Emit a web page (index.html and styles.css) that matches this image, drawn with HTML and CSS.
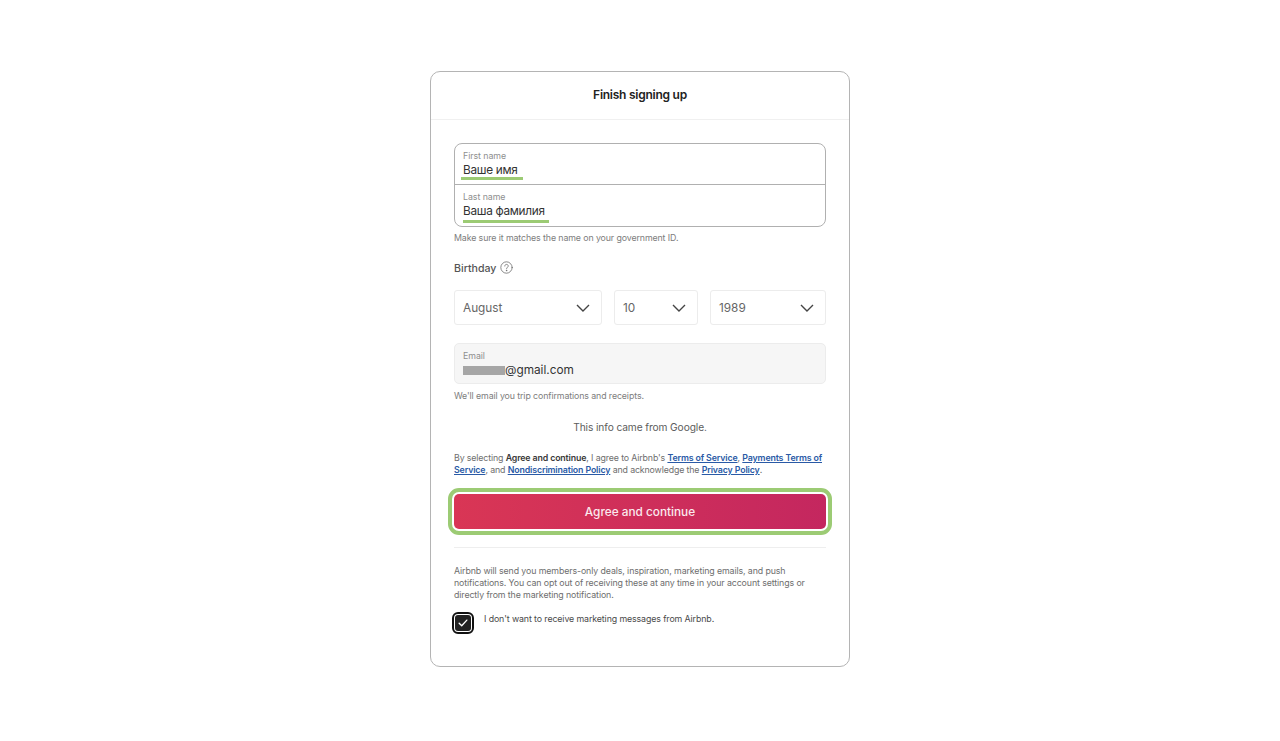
FILE: index.html
```html
<!DOCTYPE html>
<html lang="en">
<head>
<meta charset="utf-8">
<title>Finish signing up</title>
<link rel="stylesheet" href="styles.css">
</head>
<body>
<main class="card">
  <header class="card-header">Finish signing up</header>
  <div class="card-body">
    <div class="name-group">
      <div class="name-row">
        <div class="field-label">First name</div>
        <div class="field-value name-value">Ваше имя</div>
        <span class="mark mark-first"></span>
      </div>
      <div class="name-row name-row-last">
        <div class="field-label">Last name</div>
        <div class="field-value name-value">Ваша фамилия</div>
        <span class="mark mark-last"></span>
      </div>
    </div>
    <p class="hint hint-name">Make sure it matches the name on your government ID.</p>

    <div class="birthday-label">
      <span>Birthday</span>
      <svg class="help-icon" viewBox="0 0 24 24" width="13" height="13" fill="none" stroke="#666" stroke-width="1.4" stroke-linecap="round">
        <circle cx="12" cy="12" r="10.5"/>
        <path d="M8.8 9.4c0-1.9 1.4-3.1 3.2-3.1s3.2 1.2 3.2 2.9c0 2.5-3.2 2.6-3.2 5.2"/>
        <circle cx="12" cy="17.8" r="0.5" fill="#666"/>
      </svg>
    </div>

    <div class="select-row">
      <div class="select select-month"><span>August</span><svg class="chevron" viewBox="0 0 14 8" width="14" height="8"><path d="M1 1l6 6 6-6"/></svg></div>
      <div class="select select-day"><span>10</span><svg class="chevron" viewBox="0 0 14 8" width="14" height="8"><path d="M1 1l6 6 6-6"/></svg></div>
      <div class="select select-year"><span>1989</span><svg class="chevron" viewBox="0 0 14 8" width="14" height="8"><path d="M1 1l6 6 6-6"/></svg></div>
    </div>

    <div class="email-box">
      <div class="field-label">Email</div>
      <div class="field-value email-value"><span class="redacted"></span><span>@gmail.com</span></div>
    </div>
    <p class="hint hint-email">We'll email you trip confirmations and receipts.</p>

    <p class="source">This info came from Google.</p>

    <p class="terms">By selecting <strong>Agree and continue</strong>, I agree to Airbnb's <a href="#">Terms of Service</a>, <a href="#">Payments Terms of</a> <a href="#">Service</a>, and <a href="#">Nondiscrimination Policy</a> and acknowledge the <a href="#">Privacy Policy</a>.</p>

    <button class="agree" type="button">Agree and continue</button>

    <hr class="divider">

    <p class="marketing">Airbnb will send you members-only deals, inspiration, marketing emails, and push notifications. You can opt out of receiving these at any time in your account settings or directly from the marketing notification.</p>

    <div class="opt-out">
      <span class="checkbox">
        <svg viewBox="0 0 12 10" width="10" height="8" fill="none" stroke="#fff" stroke-width="1.7" stroke-linecap="round" stroke-linejoin="round"><path d="M1.2 5.2l3.2 3.2 6.4-7"/></svg>
      </span>
      <span class="opt-text">I don't want to receive marketing messages from Airbnb.</span>
    </div>
  </div>
</main>
</body>
</html>
```

FILE: styles.css
```css
* { box-sizing: border-box; }
html, body { margin: 0; padding: 0; background: #fff; }
body {
  font-family: "Inter", "Noto Sans", "Liberation Sans", sans-serif;
  color: #222;
  height: 741px;
  overflow: hidden;
  padding-top: 71px;
}
p { margin: 0; }

.card {
  width: 420px;
  height: 596px;
  margin: 0 auto;
  border: 1px solid #b4b4b4;
  border-radius: 10px;
}
.card-header {
  height: 48px;
  line-height: 46px;
  text-align: center;
  font-size: 12px;
  font-weight: 600;
  letter-spacing: -0.25px;
  color: #222;
  border-bottom: 1px solid #f0f0f0;
}
.card-body { padding: 23px 23px 0; }

.name-group {
  height: 84px;
  border: 1px solid #b0b0b0;
  border-radius: 8px;
}
.name-row {
  position: relative;
  height: 40px;
  padding: 6px 8px 0;
}
.name-row-last {
  height: 42px;
  border-top: 1px solid #b0b0b0;
}
.field-label {
  font-size: 8.8px;
  line-height: 12px;
  letter-spacing: -0.05px;
  color: #8f8f8f;
}
.field-value {
  font-size: 11.8px;
  line-height: 16px;
  color: #333;
}
.name-value { letter-spacing: -0.3px; }
.mark {
  position: absolute;
  height: 3px;
  background: #9ccb74;
}
.mark-first { left: 6px; width: 62px; top: 33px; }
.mark-last { left: 8px; width: 86px; top: 35px; }

.hint {
  font-size: 8.8px;
  line-height: 12px;
  letter-spacing: -0.1px;
  color: #7d7d7d;
}
.hint-name { margin-top: 5px; }
.birthday-label {
  display: flex;
  align-items: center;
  gap: 4px;
  margin-top: 17px;
  height: 14px;
  font-size: 10.6px;
  font-weight: 500;
  color: #555;
}
.help-icon { margin-top: -2px; }

.select-row {
  display: flex;
  gap: 12px;
  margin-top: 15px;
}
.select {
  display: flex;
  align-items: center;
  justify-content: space-between;
  height: 35px;
  padding: 0 11px 0 8px;
  border: 1px solid #ececec;
  border-radius: 3px;
  font-size: 11.8px;
  color: #666;
}
.select-month { width: 148px; }
.select-day { width: 84px; }
.select-year { width: 116px; }
.chevron { fill: none; stroke: #444; stroke-width: 1.4; }

.email-box {
  height: 41px;
  margin-top: 18px;
  padding: 6px 8px 0;
  background: #f6f6f6;
  border: 1px solid #ececec;
  border-radius: 5px;
}
.email-value {
  display: flex;
  align-items: center;
}
.redacted {
  width: 42px;
  height: 9px;
  background: #a6a6a6;
}
.hint-email { margin-top: 6px; }

.source {
  margin-top: 18px;
  text-align: center;
  font-size: 10.2px;
  line-height: 14px;
  letter-spacing: -0.1px;
  color: #5c5c5c;
}
.terms {
  margin-top: 18px;
  font-size: 8.8px;
  line-height: 12px;
  letter-spacing: -0.13px;
  color: #6e6e6e;
}
.terms strong { font-weight: 600; color: #3a3a3a; }
.terms a { font-weight: 600; color: #2a5aa6; text-decoration: underline; }

.agree {
  display: block;
  width: 100%;
  height: 35px;
  margin-top: 18px;
  border: 0;
  border-radius: 5px;
  background: linear-gradient(90deg, #d93655, #c4275f);
  color: #fbe9ee;
  font: 500 11.8px "Inter", "Noto Sans", sans-serif;
  outline: 4px solid #9ccb74;
  outline-offset: 2px;
}
.divider {
  height: 1px;
  margin: 18px 0 0;
  border: 0;
  background: #eeeeee;
}
.marketing {
  margin-top: 17px;
  font-size: 8.8px;
  line-height: 12px;
  letter-spacing: -0.1px;
  color: #6e6e6e;
}
.opt-out {
  display: flex;
  align-items: flex-start;
  margin-top: 12px;
  margin-left: -2px;
}
.checkbox {
  display: flex;
  align-items: center;
  justify-content: center;
  flex: none;
  width: 16px;
  height: 16px;
  margin: 2px 0 0 3px;
  background: #222;
  border-radius: 3px;
  outline: 2px solid #111;
  outline-offset: 1px;
}
.opt-text {
  margin-left: 13px;
  font-size: 8.8px;
  line-height: 12px;
  letter-spacing: -0.1px;
  color: #4a4a4a;
}
```
